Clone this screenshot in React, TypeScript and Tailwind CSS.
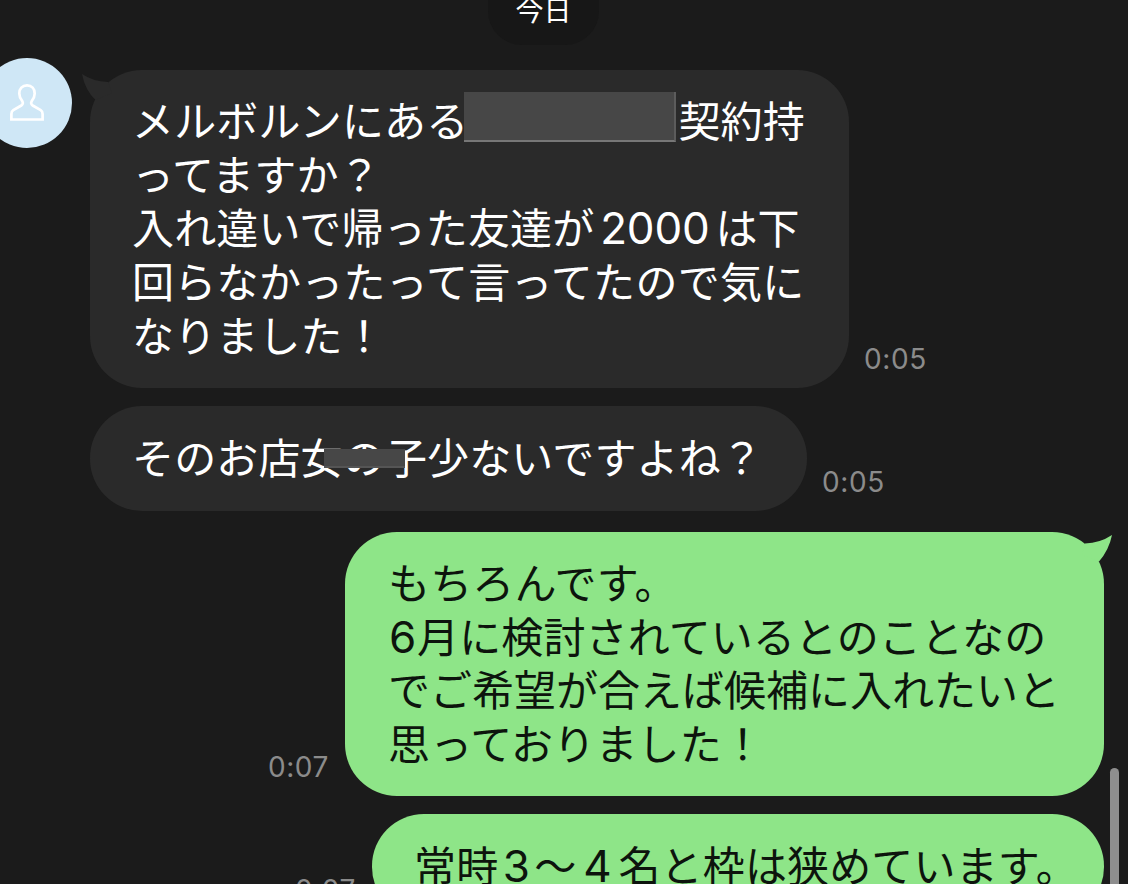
import React from 'react';

interface RowProps {
  time: string;
  children: React.ReactNode;
}

const timeClass = "font-['Inter',sans-serif] text-[28px] leading-[34px] tracking-[0.6px] text-[#8b8b8b]";

// Latin digits set in a slightly larger face than the kana around them
function Num({ className, children }: { className: string; children: React.ReactNode }) {
  return (
    <span className={`inline-block text-center font-['Inter',sans-serif] text-[44px] leading-[40px] tracking-[-0.2px] ${className}`}>
      {children}
    </span>
  );
}

function Received({ time, children }: RowProps) {
  return (
    <div className="flex items-end gap-[15px] pl-[90px]">
      {children}
      <time className={`mb-[12px] ${timeClass}`}>{time}</time>
    </div>
  );
}

function Sent({ time, children }: RowProps) {
  return (
    <div className="flex items-end justify-end gap-4 pr-[24px]">
      <time className={`mb-[12px] ${timeClass}`}>{time}</time>
      {children}
    </div>
  );
}

function Avatar() {
  return (
    <div className="absolute -left-[18px] -top-[12px] flex size-[90px] items-center justify-center rounded-full bg-[#cfe7f6]">
      <svg className="-mt-[2px]" width="34" height="37" viewBox="0 0 34 37" fill="none" stroke="#fff" strokeWidth="2.7">
        <path d="M17 1.4c-4.8 0-7.7 3.3-7.7 8 0 3.3 1.3 5.6 3 7.8 1 1.5.7 3.2-1 4.300L3.300 26.200C1.900 27.100 1.400 28.300 1.400 30v5.500h31.200V30c0-1.700-.5-2.900-1.900-3.800l-8-4.700c-1.700-1.100-2-2.800-1-4.300 1.700-2.200 3-4.500 3-7.800 0-4.700-2.900-8-7.700-8z" />
      </svg>
    </div>
  );
}

export default function App() {
  return (
    <div className="relative h-[884px] w-[1128px] overflow-hidden whitespace-nowrap bg-[#1b1b1b] font-['Noto_Sans_CJK_JP',sans-serif]">
      {/* Date pill */}
      <div className="flex h-[70px] items-start justify-center pr-[41px]">
        <div className="flex h-[45px] w-[111px] items-start justify-center rounded-b-[34px] bg-[#171717]">
          <span className="-mt-[11px] text-[28px] leading-[40px] text-white">今日</span>
        </div>
      </div>

      <main className="flex flex-col text-[42px] leading-[53.7px] tracking-[0.15px]">
        <div className="relative">
          <Avatar />
          <svg className="absolute left-[82px] top-[3px]" width="30" height="30" viewBox="0 0 30 30" fill="#2a2a2a">
            <path d="M0 1Q11 8.500 26 9L30 20L13.500 27Q3 17 0 1z" />
          </svg>
          <Received time="0:05">
            <div className="h-[318px] w-[759px] rounded-[52px] bg-[#2a2a2a] pl-[42px] pt-[22px] text-white">
              <p className="flex">
                メルボルンにある
                <span className="relative w-[210px]">
                  <span className="absolute -left-[4px] top-0 h-[50px] w-[212px] border-b-2 border-r-2 border-b-[#777] border-r-[#5c5c5c] bg-[#474747]" />
                </span>
                契約持
              </p>
              <p>ってますか？</p>
              <p>入れ違いで帰った友達が<Num className="w-[121px]">2000</Num>は下</p>
              <p className="tracking-[0.3px]">回らなかったって言ってたので気に</p>
              <p>なりました！</p>
            </div>
          </Received>
        </div>

        <div className="mt-[18px]">
          <Received time="0:05">
            <div className="relative h-[105px] w-[717px] rounded-[52px] bg-[#2a2a2a] pl-[42px] pt-[23px] text-white">
              <p>そのお店女の子少ないですよね？</p>
              <span className="absolute left-[234px] top-[43px] h-[19px] w-[81px] border-b-2 border-b-[#555] bg-[#474747]" />
            </div>
          </Received>
        </div>

        <div className="relative mt-[21px]">
          <svg className="absolute right-[16px] top-[3px]" width="30" height="30" viewBox="0 0 30 30" fill="#8ee588">
            <path d="M30 0Q18 8 3 8.500L0 20L17 26.500Q27 15 30 0z" />
          </svg>
          <Sent time="0:07">
            <div className="h-[264px] w-[759px] rounded-[52px] bg-[#8ee588] pl-[43px] pt-[22px] text-[#0d140d]">
              <p>もちろんです。</p>
              <p><Num className="w-[29px]">6</Num>月に検討されているとのことなの</p>
              <p className="tracking-normal">でご希望が合えば候補に入れたいと</p>
              <p>思っておりました！</p>
            </div>
          </Sent>
        </div>

        <div className="mt-[18px]">
          <Sent time="0:07">
            <div className="h-[105px] w-[732px] rounded-[52px] bg-[#8ee588] pl-[42px] pt-[23px] text-[#0d140d]">
              <p>常時<Num className="w-[36px]">3</Num>〜<Num className="w-[42px]">4</Num>名と枠は狭めています。</p>
            </div>
          </Sent>
        </div>
      </main>

      {/* Scroll thumb */}
      <div className="absolute right-[9px] top-[768px] h-[140px] w-[9px] rounded-full bg-[#8e8e8e]" />
    </div>
  );
}
